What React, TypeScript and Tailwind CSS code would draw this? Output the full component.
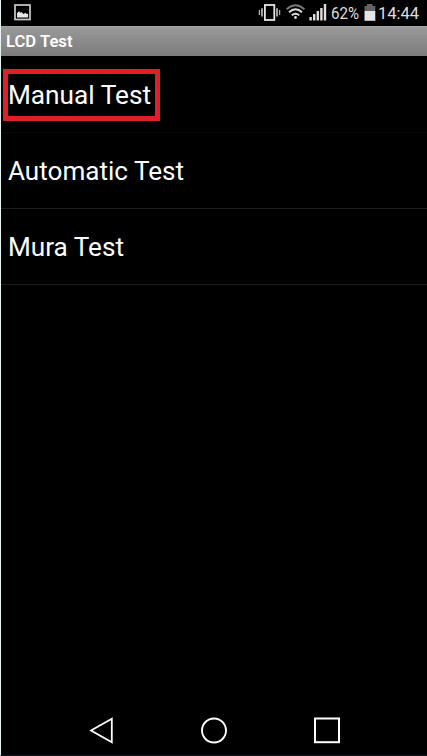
const tests = [
  { label: "Manual Test", width: 143, selected: true },
  { label: "Automatic Test", width: 176, selected: false },
  { label: "Mura Test", width: 116, selected: false },
];

function Label({ text, width, size, baseline, height, bold = false, fill = "#fff" }: { text: string; width: number; size: number; baseline: number; height: number; bold?: boolean; fill?: string }) {
  return (
    <svg width={width} height={height} className="block shrink-0 overflow-visible font-[Roboto,sans-serif]">
      <text x="0" y={baseline} fontSize={size} fontWeight={bold ? 600 : 400} fill={fill} textLength={width} lengthAdjust="spacingAndGlyphs">{text}</text>
    </svg>
  );
}

function StatusBar() {
  return (
    <header className="flex h-[26px] shrink-0 justify-between">
      <svg width="40" height="26" viewBox="0 0 40 26">
        <rect x="14" y="5" width="15" height="14.5" fill="none" stroke="#c9ccc9" strokeWidth="1.7" />
        <path d="M16 17.5v-4.3l2-2 1.5 1.5 1-.8 2 2 2-1.2 1 1.2 1-.4.6 1v3z" fill="#e3e6e3" />
      </svg>
      <div className="flex">
        <svg width="78" height="26" viewBox="252 0 78 26">
          <rect x="264.9" y="5" width="9.4" height="15" fill="none" stroke="#e4e4e4" strokeWidth="1.8" />
          <path d="M262 8.3v8.2M277 8.3v8.2" stroke="#d4d4d4" strokeWidth="1.5" />
          <path d="M259.4 10v5M279.6 10v5" stroke="#b0b0b0" strokeWidth="1.3" />
          <path d="M286.6 9.2Q295.5 1.2 304.4 9.2" fill="none" stroke="#777" strokeWidth="2" />
          <path d="M289 12.2Q295.5 6.4 302 12.2M291.8 15.3Q295.5 12.2 299.2 15.3" fill="none" stroke="#ddd" strokeWidth="2" />
          <circle cx="295.5" cy="17.5" r="1.4" fill="#ddd" />
          <path d="M309.4 17h2.4v3.5h-2.4zM313 14h2.4v6.5H313zM316.6 11h2.4v9.5h-2.4zM320.2 8h2.4v12.5h-2.4zM323.8 4h2.4v16.5h-2.4z" fill="#dedede" />
        </svg>
        <div className="ml-[1px] mr-[5px]"><Label text="62%" width={28} size={16.5} baseline={18.7} height={26} fill="#dedede" /></div>
        <svg width="12" height="26" viewBox="364 0 12 26">
          <path d="M367 4h5.5v2h2.8v5h-10.8V6h2.5z" fill="#646464" />
          <path d="M364.5 11h10.8v9.8h-10.8z" fill="#e6e6e6" />
        </svg>
        <div className="ml-[2px] mr-[8px]"><Label text="14:44" width={41} size={17} baseline={19} height={26} fill="#dedede" /></div>
      </div>
    </header>
  );
}

export default function App() {
  return (
    <div className="flex h-[756px] w-[427px] flex-col overflow-hidden border-b border-l border-b-[#12161b] border-l-[#e8f3f6] bg-black">
      <StatusBar />
      <h1 className="h-[30px] shrink-0 border-t border-[#a5a5a5] bg-gradient-to-b from-[#999] to-[#7c7c7c] pl-[5px]">
        <Label text="LCD Test" width={66.5} size={16} baseline={20.3} height={29} bold />
      </h1>
      <main className="flex-1">
        {tests.map((test, index) => (
          <div key={test.label} className={index === 0 ? "h-[77px] border-b border-[#060606] pl-[2px] pt-[13px]" : "h-[76px] border-b border-[#1d1d1d] pl-[2px] pt-[12px]"}>
            <div className={test.selected ? "h-[52px] w-[157px] border-[5px] border-[#df2027]" : "h-[52px] w-[186px] border-[5px] border-transparent"}>
              <Label text={test.label} width={test.width} size={26} baseline={30.2} height={42} />
            </div>
          </div>
        ))}
      </main>
      <nav className="h-[52px] shrink-0">
        <svg width="426" height="52" viewBox="1 703 426 52" fill="none" stroke="white">
          <path d="M91 730.5L111.8 718.8v23.5z" strokeWidth="1.8" />
          <circle cx="214" cy="730.5" r="12" strokeWidth="1.9" />
          <rect x="315" y="718.5" width="24" height="23.7" strokeWidth="2" />
        </svg>
      </nav>
    </div>
  );
}
